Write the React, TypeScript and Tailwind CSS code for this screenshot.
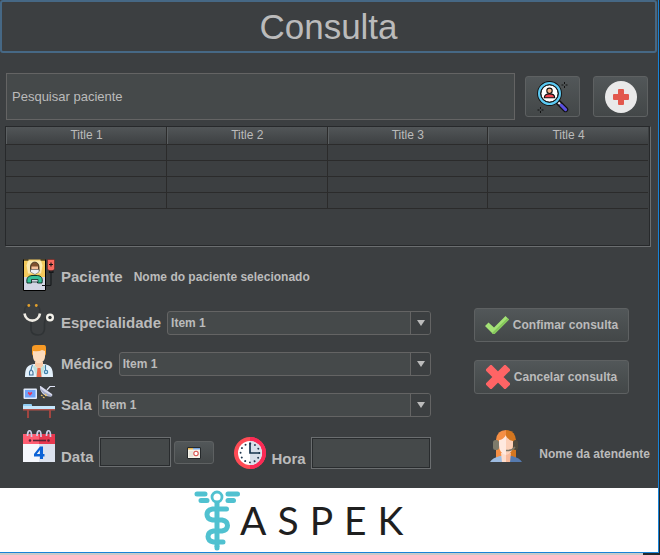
import type { ReactNode } from "react";

const titles = ["Title 1", "Title 2", "Title 3", "Title 4"];
const rows = [0, 1, 2, 3];

function SearchPersonIcon() {
  return (
    <svg viewBox="0 0 32 32" className="size-8" aria-hidden="true">
      <path d="M21.5 21.5 L28.5 28.5" stroke="#111" strokeWidth="5.4" strokeLinecap="round" />
      <path d="M24 24 L28.6 28.6" stroke="#5b50e0" strokeWidth="3" strokeLinecap="round" />
      <path d="M21.3 21.3 L23 23" stroke="#e8e8f4" strokeWidth="2.4" />
      <circle cx="12.5" cy="12.5" r="10.4" fill="#fff" stroke="#111" strokeWidth="4" />
      <circle cx="12.5" cy="12.5" r="10.4" fill="none" stroke="#5cc9f2" strokeWidth="2.2" />
      <circle cx="12.5" cy="12.5" r="8.6" fill="none" stroke="#111" strokeWidth="0.9" />
      <path d="M7.3 16.8c0-3 2.2-3.9 5.2-3.9s5.2 .9 5.2 3.9z" fill="#f2444e" stroke="#111" strokeWidth="1.1" />
      <circle cx="12.5" cy="9.8" r="2.7" fill="#f6b48a" stroke="#111" strokeWidth="1.1" />
      <path d="M27.500 1v2M27.500 5v2M24.500 4h2M28.500 4h2M3.500 26v2M3.500 30v2M.5 29h2M4.500 29h2" stroke="#111" strokeWidth="1" />
    </svg>
  );
}

function PlusIcon() {
  return (
    <svg viewBox="0 0 32 32" className="size-8" aria-hidden="true">
      <circle cx="16" cy="16" r="16" fill="#e9e9e9" />
      <path d="M13 9q0-1 1-1h4q1 0 1 1v4h4q1 0 1 1v4q0 1-1 1h-4v4q0 1-1 1h-4q-1 0-1-1v-4H9q-1 0-1-1v-4q0-1 1-1h4z" fill="#e2574c" />
    </svg>
  );
}

function PatientIcon() {
  return (
    <svg viewBox="0 0 32 32" className="size-8 shrink-0" aria-hidden="true">
      <path d="M.5 .5h22v31H.5z" fill="#f3c95c" />
      <path d="M5 1.500h13l1.500 5-1.500 8H5l-1.500-8z" fill="#fbe9b0" />
      <path d="M1 18h21.500v13.500H1z" fill="#d2d5e4" />
      <path d="M7.500 8c0-6.500 8.500-6.500 8.500 0v4H7.500z" fill="#80522f" stroke="#1a1208" strokeWidth=".7" />
      <path d="M8.500 7.500h6.500v3H8.500z" fill="#f5c29b" />
      <path d="M7.500 10.500h8.500v2.500l-4 2.500-4.500-2.500z" fill="#eef1f4" stroke="#444" strokeWidth=".5" />
      <path d="M4 24c-.8-5 1-7 5-7.500h5.500c4 .5 5.500 2.500 4.500 7.500h-4.500v-3H8.500v3z" fill="#35c097" stroke="#06231a" strokeWidth=".9" />
      <path d="M8.500 20.500h6.500V23H8.500z" fill="#d2d5e4" stroke="#06231a" strokeWidth=".7" />
      <path d="M.5 .5v31h22V.5" fill="none" stroke="#000" />
      <path d="M.5 1h5M17.500 1h5" stroke="#000" strokeWidth="1" />
      <path d="M24.500 .5h7v9.500l-2 2h-3l-2-2z" fill="#f8695f" stroke="#5e1a16" strokeWidth=".5" />
      <path d="M28 3.500v4M26 5.500h4" stroke="#111" strokeWidth="1.1" />
      <path d="M26.500 12h3.500v1.500h-3.500zM28 13v12.500q0 1-1 1h-8" fill="none" stroke="#15181a" strokeWidth="1.1" />
    </svg>
  );
}

function StethoscopeIcon() {
  return (
    <svg viewBox="0 0 32 32" className="size-8 shrink-0" aria-hidden="true">
      <path d="M5 1.500C1 3 1 6 2 10M13.500 1.500c4 1.500 4 4.500 3 8.500" fill="none" stroke="#333739" strokeWidth="1.400" />
      <path d="M8 17v9q1 5 7 5t6.500-6v-6q.5-5 4-5.500" fill="none" stroke="#303436" strokeWidth="1.600" />
      <path d="M1.500 9.500C3 19 15.500 19 17 9.500" fill="none" stroke="#efece4" strokeWidth="2.600" />
      <circle cx="5.800" cy="1.500" r="1.400" fill="#e2a02c" />
      <circle cx="13.300" cy="1.500" r="1.400" fill="#e2a02c" />
      <circle cx="27" cy="13.500" r="4" fill="#f5f3ec" />
      <circle cx="27" cy="13.500" r="1.700" fill="#34383a" />
    </svg>
  );
}

function DoctorIcon() {
  return (
    <svg viewBox="0 0 32 32" className="size-8 shrink-0" aria-hidden="true">
      <path d="M2 32c0-9 2-12 9-13h10c7 1 9 4 9 13z" fill="#e4f1fb" />
      <path d="M12 17h8v4l-4 4-4-4z" fill="#f8c9a5" />
      <path d="M11 20l5 5 5-5 1 2-4 10h-4l-4-10z" fill="#bfe2dc" />
      <path d="M14.500 23h3l1 9h-5z" fill="#ee6a4b" />
      <path d="M9 9V3q0-3 4-3h8q2 0 2 3v6l-1.500 3h-11z" fill="#f79a25" />
      <path d="M10 6q6 1 9-1l3 1v6c-1 8-11 8-12 0z" fill="#fddcbd" />
      <path d="M9.500 20c-1 2-1 3-1.500 5M22.500 20v5" fill="none" stroke="#3e7da6" strokeWidth="1.100" />
      <path d="M6.500 30v-3q1.500-4 3.500 0v3z" fill="none" stroke="#3e6f96" strokeWidth="1.100" />
      <circle cx="23" cy="27" r="1.700" fill="#b9dcf2" stroke="#3e7da6" strokeWidth="1.100" />
    </svg>
  );
}

function RoomIcon() {
  return (
    <svg viewBox="0 0 32 32" className="size-8 shrink-0" aria-hidden="true">
      <rect x=".5" y="2.500" width="13.500" height="10.500" rx="1" fill="#dfe9fa" />
      <rect x="2" y="4" width="10.500" height="7.500" fill="#6ea2fa" />
      <path d="M7 9.800 4.800 7.600q0-2 1.500-1.300l.7.600.7-.6q1.500-.7 1.500 1.300z" fill="#e9365d" />
      <path d="M17 1q-.5-1.500 1-.8L29 8q1 2-1 2.500C21 11 17 6 17 1z" fill="#d9dcef" />
      <path d="M17 2q2 7 11 8.500l1-1Q22 7 17 2z" fill="#a4abc9" />
      <path d="M24 4l3-3.500h5" stroke="#dfe3f4" strokeWidth="1.200" fill="none" />
      <path d="M18 9l1.500 1M20 11l1.500 1M22 8l1.500 2" stroke="#eec469" strokeWidth="1.300" />
      <rect x="0" y="18" width="9" height="3" rx="1" fill="#8fcdf5" />
      <rect x="0" y="20" width="32" height="3" fill="#c5e5fb" />
      <rect x="0" y="23" width="32" height="1.500" fill="#b0524a" />
      <path d="M4 24h2v8H4zM26 24h2v8h-2z" fill="#a24540" />
    </svg>
  );
}

function CalendarIcon() {
  return (
    <svg viewBox="0 0 32 32" className="size-8 shrink-0" aria-hidden="true">
      <path d="M0 4h32v11H0z" fill="#e8384f" />
      <path d="M0 4h16v11H0z" fill="#ff5d72" />
      <path d="M0 14h32v18H0z" fill="#dce2ee" />
      <path d="M0 14h16v18H0z" fill="#f5f7fc" />
      <path d="M10 10.500h13" stroke="#5a2435" strokeWidth="1.600" />
      <g fill="#5a2435"><circle cx="7" cy="10.500" r="1.300" /><circle cx="25.500" cy="10.500" r="1.300" /></g>
      <path d="M4.500 6c0-7 4-7 4 0v1M14 6c0-7 4-7 4 0v1M23.500 6c0-7 4-7 4 0v1" fill="none" stroke="#c9cfe8" strokeWidth="1.700" />
      <path d="M17 16.500h3v7.500h1.500v2.500H20V29h-3v-2.500h-6V24zM17 20l-3.200 4H17z" fill="#0c62d6" fillRule="evenodd" />
    </svg>
  );
}

function DatePickerIcon() {
  return (
    <svg viewBox="0 0 14 12" className="h-3 w-3.5" aria-hidden="true">
      <path d="M.5.5h13v11H.5z" fill="#f4f2e8" stroke="#25292b" />
      <path d="M1 1h5v1.500H1z" fill="#e8b54d" />
      <path d="M6 1h7v1.500H6z" fill="#79a4dd" />
      <path d="M2 5h4M2 7h4M2 9h4" stroke="#cfcdc4" strokeWidth=".7" />
      <circle cx="9" cy="6.500" r="2.200" fill="#fff" stroke="#d9534f" strokeWidth="1.100" />
    </svg>
  );
}

function ClockIcon() {
  return (
    <svg viewBox="0 0 32 32" className="size-8 shrink-0" aria-hidden="true">
      <circle cx="16" cy="16" r="16" fill="#ff4b55" />
      <path d="M16 0a16 16 0 0 1 0 32z" fill="#fb2a55" />
      <circle cx="16" cy="16" r="12" fill="#fff" />
      <path d="M16 4a12 12 0 0 1 0 24z" fill="#d8dfea" />
      <circle cx="16" cy="16" r="9.400" fill="none" stroke="#22384f" strokeWidth="1.900" strokeLinecap="round" strokeDasharray="0.01 4.912" />
      <path d="M16 5.500V16h10" fill="none" stroke="#16344e" strokeWidth="1.700" />
    </svg>
  );
}

function CheckIcon() {
  return (
    <svg viewBox="0 0 24 24" className="size-6" aria-hidden="true">
      <path d="M0 13 3.500 9.500 9 14.500 20.500 3 24 6.500 9.500 21H8z" fill="#a4e276" />
      <path d="M24 6.500 9.500 21H8l-1-1L22.500 5z" fill="#85c75c" />
    </svg>
  );
}

function CrossIcon() {
  return (
    <svg viewBox="0 0 24 24" className="size-6" aria-hidden="true">
      <path d="M5 5 19 19M19 5 5 19" stroke="#ff6465" strokeWidth="8" strokeLinecap="square" />
    </svg>
  );
}

function AttendantIcon() {
  return (
    <svg viewBox="0 0 32 32" className="size-8 shrink-0" aria-hidden="true">
      <path d="M6 28V10Q7 0 16 0v28z" fill="#f58f45" />
      <path d="M26 28V10Q25 0 16 0v28z" fill="#d4761f" />
      <path d="M0 32q2-4 10-6h6v6z" fill="#9dbbe0" />
      <path d="M32 32q-2-4-10-6h-6v6z" fill="#557aaf" />
      <path d="M11 23h5v9h-4z" fill="#fddccb" />
      <path d="M21 23h-5v9h4z" fill="#f8b99a" />
      <path d="M9 10q4 0 7-5v20q-7-2-7-10z" fill="#ffe9df" />
      <path d="M16 6q2 4 7 5v4q0 8-7 10z" fill="#fcd0b8" />
      <rect x="3" y="10" width="6" height="10" rx="2.500" fill="#7e7b6b" />
      <rect x="23" y="10" width="5" height="10" rx="2.500" fill="#4e493d" />
      <path d="M25 17q-3 4-9 3.500" fill="none" stroke="#7d7869" strokeWidth="1.500" />
    </svg>
  );
}

function CaduceusLogo() {
  return (
    <svg viewBox="0 0 46 62" className="h-[62px] w-[46px] shrink-0" aria-hidden="true">
      <g fill="none" stroke="#50c1d0" strokeLinecap="round">
        <path d="M3 5h8M7 11.500h6M34 5h9.500M34 11.500h5.500" strokeWidth="5" />
        <circle cx="23" cy="8" r="5" strokeWidth="2.800" />
        <path d="M23 14v44" strokeWidth="5" strokeLinecap="butt" />
        <path d="M32.500 20H18.500q-5.500 1-5.500 5.500t5.500 5.500h9.500q5.500 1 5.500 5.500T28 42H19.500q-5.500 1-5.500 5.500T19.500 53H29" strokeWidth="5" />
        <path d="M23 58v1" strokeWidth="5" />
      </g>
    </svg>
  );
}

function IconButton({ label, children }: { label: string; children: ReactNode }) {
  return (
    <button type="button" aria-label={label} className="flex h-[41px] w-[55px] shrink-0 items-center justify-center rounded-[3px] border border-[#5e6162] bg-linear-to-b from-[#525759] to-[#434748]">
      {children}
    </button>
  );
}

function ActionButton({ icon, children }: { icon: ReactNode; children: ReactNode }) {
  return (
    <button type="button" className="flex h-[34px] w-[155px] items-center justify-center gap-1 rounded-[3px] border border-[#5e6162] bg-linear-to-b from-[#525759] to-[#434748] text-xs font-bold">
      {icon}
      {children}
    </button>
  );
}

function SelectRow({ id, label, icon }: { id: string; label: string; icon: ReactNode }) {
  return (
    <div className="flex h-8 items-center">
      {icon}
      <label htmlFor={id} className="mt-1.5 ml-1.5 text-[15px] leading-5 font-bold">{label}</label>
      <div className="relative mt-1.5 ml-1.5 flex-1">
        <select id={id} className="block h-6 w-full appearance-none rounded-[3px] border border-[#646464] bg-[#45494a] pr-6 pl-[3px] text-xs font-bold outline-none">
          <option>Item 1</option>
          <option>Item 2</option>
          <option>Item 3</option>
          <option>Item 4</option>
        </select>
        <span className="pointer-events-none absolute inset-y-px right-px flex w-5 items-center justify-center rounded-r-[2px] border-l border-[#646464] bg-[#3c3f41]">
          <svg viewBox="0 0 8 6" className="h-1.5 w-2" aria-hidden="true"><path d="M0 0h8L4 6z" fill="#bbb" /></svg>
        </span>
      </div>
    </div>
  );
}

export default function App() {
  return (
    <div className="bg-[#25282b] pr-px font-['Liberation_Sans',Arial,sans-serif] text-[#bbbbbb]">
      <div className="border-r border-b border-[#1883d7] bg-[#3c3f41]">
        <header className="mr-px flex h-[53px] items-center justify-center rounded-[3px] border-2 border-[#466885]">
          <h1 className="text-[35px] leading-10">Consulta</h1>
        </header>

        <form className="flex items-center pt-5 pr-2.5 pl-1.5">
          <input type="text" aria-label="Pesquisar paciente" defaultValue="Pesquisar paciente" className="h-[47px] min-w-0 flex-1 border border-[#646464] bg-[#45494a] px-[5px] text-[13px] outline-none" />
          <div className="ml-2.5 flex gap-[13px]">
            <IconButton label="Pesquisar"><SearchPersonIcon /></IconButton>
            <IconButton label="Adicionar paciente"><PlusIcon /></IconButton>
          </div>
        </form>

        <div className="mt-1.5 mr-[7px] ml-[5px] border border-[#27292b] border-r-[#6b6e70] border-b-[#6b6e70]">
          <div className="h-[119px] border-r border-b border-[#27292b] pr-px">
            <table className="w-full table-fixed border-collapse text-xs">
              <thead>
                <tr className="h-[17px] bg-linear-to-b from-[#525658] to-[#3c3f41]">
                  {titles.map((title) => (
                    <th key={title} scope="col" className="border-r border-b border-[#2b2b2b] p-0 leading-[17px] font-normal last:border-r-0">
                      <div className="border-l border-[#5c6062]">{title}</div>
                    </th>
                  ))}
                </tr>
              </thead>
              <tbody>
                {rows.map((row) => (
                  <tr key={row} className="h-4">
                    {titles.map((title) => (
                      <td key={title} className="border-r border-b border-[#2b2b2b] p-0 last:border-r-0" />
                    ))}
                  </tr>
                ))}
              </tbody>
            </table>
          </div>
        </div>

        <main className="flex items-start gap-[43px] pt-3 pr-2 pb-[19px] pl-[23px]">
          <div className="min-w-0 flex-1">
            <div className="flex h-8 items-center">
              <PatientIcon />
              <span className="mt-1 ml-1.5 text-[15px] leading-5 font-bold">Paciente</span>
              <span className="mt-1 ml-[11px] text-xs leading-5 font-bold">Nome do paciente selecionado</span>
            </div>
            <div className="mt-[13px] mb-3 flex flex-col gap-[9px]">
              <SelectRow id="especialidade" label="Especialidade" icon={<StethoscopeIcon />} />
              <SelectRow id="medico" label="Médico" icon={<DoctorIcon />} />
              <SelectRow id="sala" label="Sala" icon={<RoomIcon />} />
            </div>
            <div className="flex items-start">
              <div className="flex items-end">
                <div className="mb-[5px]"><CalendarIcon /></div>
                <label htmlFor="data" className="ml-1.5 text-[15px] leading-5 font-bold">Data</label>
                <input id="data" type="text" className="ml-[5px] h-[30px] w-[72px] border border-[#6b6e70] bg-[#45494a] px-1 text-xs shadow-[inset_0_0_0_1px_#292c2e] outline-none" />
                <button type="button" aria-label="Escolher data" className="mb-[3px] ml-[3px] flex h-[23px] w-10 items-center justify-center rounded-[3px] border border-[#5e6162] bg-linear-to-b from-[#525759] to-[#434748]">
                  <DatePickerIcon />
                </button>
              </div>
              <div className="ml-5 flex min-w-0 flex-1 items-end pt-[7px]">
                <ClockIcon />
                <label htmlFor="hora" className="ml-1.5 text-[15px] leading-5 font-bold">Hora</label>
                <input id="hora" type="text" className="ml-[5px] h-8 min-w-0 flex-1 border border-[#6b6e70] bg-[#45494a] px-1 text-xs shadow-[inset_0_0_0_1px_#292c2e] outline-none" />
              </div>
            </div>
          </div>

          <div className="flex w-[176px] flex-col pt-[49px]">
            <ActionButton icon={<CheckIcon />}>Confimar consulta</ActionButton>
            <div className="mt-[18px]">
              <ActionButton icon={<CrossIcon />}>Cancelar consulta</ActionButton>
            </div>
            <div className="mt-9 flex items-end justify-between pl-4">
              <AttendantIcon />
              <span className="text-xs leading-4 font-bold">Nome da atendente</span>
            </div>
          </div>
        </main>

        <footer className="flex h-16 items-center bg-white pl-[29.5%] text-[#1f1f1f]">
          <CaduceusLogo />
          <span className="font-[Lato] text-[39px] leading-none tracking-[11px]">ASPEK</span>
        </footer>
      </div>
      <div className="mr-4 h-0.5 bg-[#c9c9c9]" />
    </div>
  );
}
